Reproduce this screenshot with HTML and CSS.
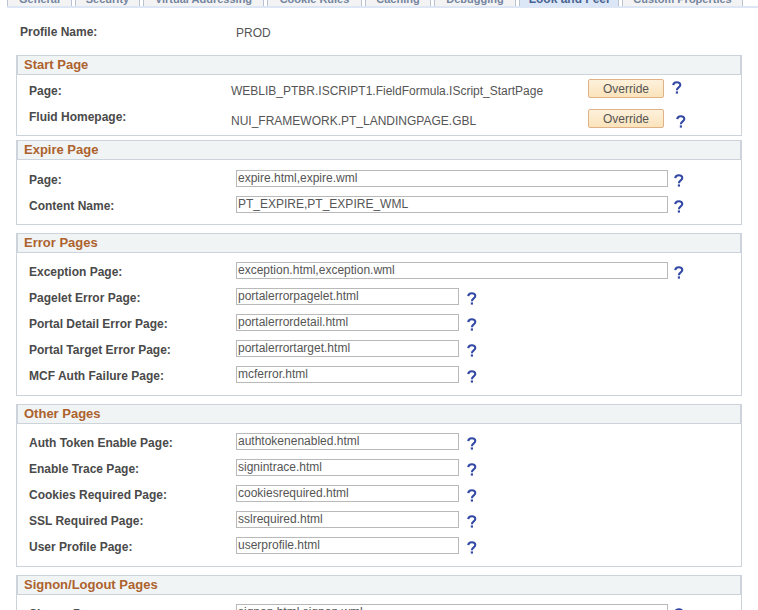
FILE: index.html
```
<!DOCTYPE html>
<html lang="en">
<head>
<meta charset="utf-8">
<title>Web Profile</title>
<link rel="stylesheet" href="styles.css">
</head>
<body>
<svg class="defs" aria-hidden="true">
  <symbol id="q" viewBox="0 0 10 13">
    <path d="M1.2 4.2C1.6 .5 8.3 .3 8.3 4C8.3 6.4 4.9 6.3 4.9 9.2" fill="none" stroke="#3349a4" stroke-width="2.1"/>
    <path d="M3.8 10.4h2.2v2.2h-2.2z" fill="#3349a4"/>
  </symbol>
</svg>
<nav class="tabs">
  <a href="#">General</a>
  <a href="#">Security</a>
  <a href="#">Virtual Addressing</a>
  <a href="#">Cookie Rules</a>
  <a href="#">Caching</a>
  <a href="#">Debugging</a>
  <a href="#" class="active">Look and Feel</a>
  <a href="#">Custom Properties</a>
</nav>
<main>
  <div class="profile"><b>Profile Name:</b><span>PROD</span></div>

  <section class="panel start">
    <h2>Start Page</h2>
    <div class="fields">
      <div class="entry"><b class="low">Page:</b><span class="low">WEBLIB_PTBR.ISCRIPT1.FieldFormula.IScript_StartPage</span><button type="button">Override</button><a href="#" class="help" aria-label="Help"><svg><use href="#q"/></svg></a></div>
      <div class="entry"><b>Fluid Homepage:</b><span class="low">NUI_FRAMEWORK.PT_LANDINGPAGE.GBL</span><button type="button">Override</button><a href="#" class="help low" aria-label="Help"><svg><use href="#q"/></svg></a></div>
    </div>
  </section>

  <section class="panel expire">
    <h2>Expire Page</h2>
    <div class="fields">
      <div class="row"><label for="f1">Page:</label><input id="f1" class="long" value="expire.html,expire.wml"><a href="#" class="help" aria-label="Help"><svg><use href="#q"/></svg></a></div>
      <div class="row"><label for="f2">Content Name:</label><input id="f2" class="long" value="PT_EXPIRE,PT_EXPIRE_WML"><a href="#" class="help" aria-label="Help"><svg><use href="#q"/></svg></a></div>
    </div>
  </section>

  <section class="panel">
    <h2>Error Pages</h2>
    <div class="fields">
      <div class="row"><label for="f3">Exception Page:</label><input id="f3" class="long" value="exception.html,exception.wml"><a href="#" class="help" aria-label="Help"><svg><use href="#q"/></svg></a></div>
      <div class="row"><label for="f4">Pagelet Error Page:</label><input id="f4" value="portalerrorpagelet.html"><a href="#" class="help" aria-label="Help"><svg><use href="#q"/></svg></a></div>
      <div class="row"><label for="f5">Portal Detail Error Page:</label><input id="f5" value="portalerrordetail.html"><a href="#" class="help" aria-label="Help"><svg><use href="#q"/></svg></a></div>
      <div class="row"><label for="f6">Portal Target Error Page:</label><input id="f6" value="portalerrortarget.html"><a href="#" class="help" aria-label="Help"><svg><use href="#q"/></svg></a></div>
      <div class="row"><label for="f7">MCF Auth Failure Page:</label><input id="f7" value="mcferror.html"><a href="#" class="help" aria-label="Help"><svg><use href="#q"/></svg></a></div>
    </div>
  </section>

  <section class="panel">
    <h2>Other Pages</h2>
    <div class="fields">
      <div class="row"><label for="f8">Auth Token Enable Page:</label><input id="f8" value="authtokenenabled.html"><a href="#" class="help" aria-label="Help"><svg><use href="#q"/></svg></a></div>
      <div class="row"><label for="f9">Enable Trace Page:</label><input id="f9" value="signintrace.html"><a href="#" class="help" aria-label="Help"><svg><use href="#q"/></svg></a></div>
      <div class="row"><label for="f10">Cookies Required Page:</label><input id="f10" value="cookiesrequired.html"><a href="#" class="help" aria-label="Help"><svg><use href="#q"/></svg></a></div>
      <div class="row"><label for="f11">SSL Required Page:</label><input id="f11" value="sslrequired.html"><a href="#" class="help" aria-label="Help"><svg><use href="#q"/></svg></a></div>
      <div class="row"><label for="f12">User Profile Page:</label><input id="f12" value="userprofile.html"><a href="#" class="help" aria-label="Help"><svg><use href="#q"/></svg></a></div>
    </div>
  </section>

  <section class="panel">
    <h2>Signon/Logout Pages</h2>
    <div class="fields">
      <div class="row"><label for="f13">Signon Page:</label><input id="f13" class="long" value="signon.html,signon.wml"><a href="#" class="help" aria-label="Help"><svg><use href="#q"/></svg></a></div>
    </div>
  </section>
</main>
</body>
</html>
```
FILE: styles.css
```
* { box-sizing: border-box; }
html { height: 100%; overflow: hidden; }
body {
  margin: 0;
  height: 100%;
  overflow: hidden;
  background: #fff;
  color: #555;
  font: 12px/16px "Liberation Sans", Arial, sans-serif;
}
.defs { display: none; }

.tabs {
  display: grid;
  grid-template-columns: 65fr 65fr 121fr 95fr 66fr 82fr 100fr 121fr;
  gap: 3px;
  margin: -14px 0 0 7px;
  padding-right: 15px;
  border-bottom: 2px solid #dce6f4;
}
.tabs a {
  height: 20px;
  border: 1px solid #b9c2d0;
  border-bottom: 0;
  background: #f3f3f3;
  color: #7484a0;
  font-size: 11px;
  font-weight: bold;
  line-height: 24px;
  text-align: center;
  text-decoration: none;
  white-space: nowrap;
}
.tabs .active { background: #dbe7f7; color: #4a6391; font-size: 12px; }

main { padding: 0 16px; }
.profile {
  display: grid;
  grid-template-columns: 216px 1fr;
  padding: 16px 0 14px 4px;
}
.profile b, label, .entry b { color: #4a4a4a; font-weight: bold; }
.profile span { padding-top: 1px; }

.panel { border: 1px solid #cdd3da; margin-bottom: 8px; }
.panel h2 {
  margin: 0;
  padding: 0 0 0 6px;
  border: solid #cdd3da;
  border-width: 0 1px 1px;
  background: #f0f4f5;
  color: #ad622d;
  font-size: 13px;
  line-height: 18px;
}
.fields { display: grid; gap: 9px; padding: 9px 12px 12px; }
.row { display: flex; align-items: flex-start; height: 17px; }
label { width: 207px; padding-top: 2px; flex: none; }
input {
  width: 223px;
  height: 17px;
  padding: 0 0 2px 1px;
  border: 1px solid #b9b9b9;
  background: #fff;
  color: #555;
  font: inherit;
  line-height: 14px;
}
.long { width: 432px; }
.help { width: 10px; padding-top: 4px; margin-left: 8px; }
.help svg { display: block; width: 10px; height: 13px; }
.long + .help { margin-left: 6px; }

.start { margin-bottom: 4px; }
.start .fields { gap: 11px; padding: 4px 12px 7px; }
.expire .fields { padding: 10px 12px 11px; }
.entry {
  display: grid;
  grid-template-columns: 202px 357px 76px 1fr;
  align-items: start;
  height: 19px;
}
.entry .low { padding-top: 4px; }
.entry .help { padding-top: 2px; }
.entry .help.low { padding-top: 6px; margin-left: 12px; }
button {
  height: 19px;
  padding: 0;
  border: 1px solid #dfb387;
  border-radius: 2px;
  background: linear-gradient(#fdf1dc, #fbe3bb);
  color: #555;
  font: inherit;
}
```
